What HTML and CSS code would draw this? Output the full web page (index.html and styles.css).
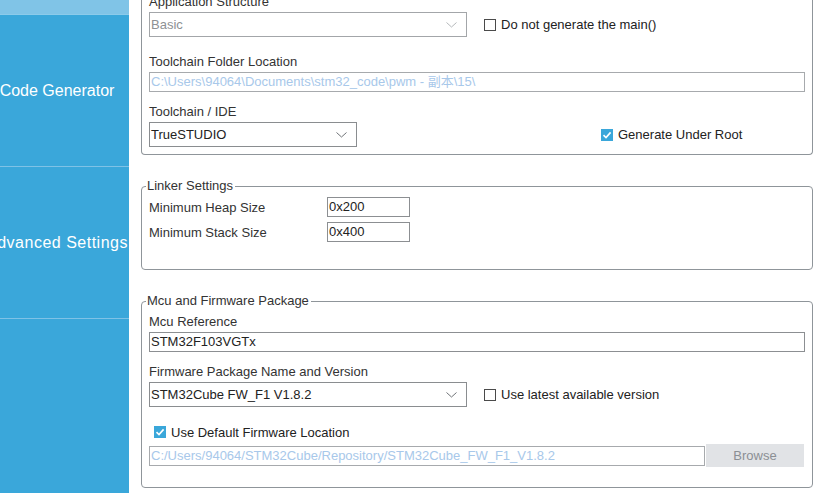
FILE: index.html
```html
<!DOCTYPE html>
<html>
<head>
<meta charset="utf-8">
<link rel="stylesheet" href="styles.css">
</head>
<body>
<div class="app">
  <nav class="sidebar">
    <div class="side-top"></div>
    <div class="side-item"><span class="side-label">Code Generator</span></div>
    <div class="side-item"><span class="side-label side-label-wide">Advanced Settings</span></div>
    <div class="side-rest"></div>
  </nav>
  <main class="main">
    <section class="panel panel-cut">
      <div class="label">Application Structure</div>
      <div class="row">
        <div class="select select-wide disabled"><span>Basic</span>
          <svg class="chev" width="11" height="6" viewBox="0 0 11 6"><path d="M0.5 0.5 L5.5 5 L10.5 0.5" fill="none" stroke="#b5b8bb" stroke-width="1"/></svg>
        </div>
        <label class="check"><span class="box"></span>Do not generate the main()</label>
      </div>
      <div class="label gap-l">Toolchain Folder Location</div>
      <div class="input full disabled-text">C:\Users\94064\Documents\stm32_code\pwm - 副本\15\</div>
      <div class="label gap-s">Toolchain / IDE</div>
      <div class="row">
        <div class="select select-narrow"><span>TrueSTUDIO</span>
          <svg class="chev" width="11" height="6" viewBox="0 0 11 6"><path d="M0.5 0.5 L5.5 5 L10.5 0.5" fill="none" stroke="#6f7377" stroke-width="1"/></svg>
        </div>
        <label class="check check-root"><span class="box checked"><svg width="12" height="12" viewBox="0 0 12 12"><path d="M2.5 6.2 L5 8.6 L9.6 3.4" fill="none" stroke="#fff" stroke-width="1.6"/></svg></span>Generate Under Root</label>
      </div>
    </section>

    <fieldset class="group linker">
      <legend>Linker Settings</legend>
      <div class="kv">
        <span class="kv-label">Minimum Heap Size</span>
        <div class="input small">0x200</div>
      </div>
      <div class="kv">
        <span class="kv-label">Minimum Stack Size</span>
        <div class="input small">0x400</div>
      </div>
    </fieldset>

    <fieldset class="group mcu">
      <legend>Mcu and Firmware Package</legend>
      <div class="label">Mcu Reference</div>
      <div class="input full">STM32F103VGTx</div>
      <div class="label gap-s">Firmware Package Name and Version</div>
      <div class="row">
        <div class="select select-wide"><span>STM32Cube FW_F1 V1.8.2</span>
          <svg class="chev" width="11" height="6" viewBox="0 0 11 6"><path d="M0.5 0.5 L5.5 5 L10.5 0.5" fill="none" stroke="#6f7377" stroke-width="1"/></svg>
        </div>
        <label class="check"><span class="box"></span>Use latest available version</label>
      </div>
      <label class="check check-default"><span class="box checked"><svg width="12" height="12" viewBox="0 0 12 12"><path d="M2.5 6.2 L5 8.6 L9.6 3.4" fill="none" stroke="#fff" stroke-width="1.6"/></svg></span>Use Default Firmware Location</label>
      <div class="row browse-row">
        <div class="input path disabled-text">C:/Users/94064/STM32Cube/Repository/STM32Cube_FW_F1_V1.8.2</div>
        <button class="btn">Browse</button>
      </div>
    </fieldset>
  </main>
</div>
</body>
</html>
```
FILE: styles.css
```css
html, body {
  margin: 0;
  padding: 0;
  background: #ffffff;
  font-family: "Liberation Sans", Arial, "Noto Sans CJK SC", sans-serif;
  font-size: 13px;
  color: #333333;
}
.app {
  display: flex;
  width: 824px;
  height: 493px;
  overflow: hidden;
}
.sidebar {
  width: 129px;
  flex: none;
  background: #3aa7da;
  display: flex;
  flex-direction: column;
  overflow: hidden;
}
.side-top {
  height: 14px;
  background: #80c4e7;
  border-bottom: 1px solid #8ccbea;
}
.side-item {
  height: 151px;
  border-bottom: 1px solid #7fc2e6;
  display: flex;
  align-items: center;
  justify-content: flex-start;
}
.side-item .side-label {
  flex: none;
  width: 180px;
  margin-left: -33px;
  text-align: center;
  color: #ffffff;
  font-size: 16px;
  white-space: nowrap;
}
.side-item .side-label-wide {
  letter-spacing: 0.5px;
}
.side-rest { flex: 1; }

.main {
  flex: 1;
  margin-left: 12px;
  margin-right: 11px;
  display: flex;
  flex-direction: column;
}
.panel-cut {
  margin-top: -6px;
  border: 1px solid #8f959a;
  border-top: none;
  border-radius: 0 0 4px 4px;
  padding: 0 7px 7px;
}
.label {
  line-height: 16px;
  height: 16px;
  margin-bottom: 2px;
  white-space: nowrap;
}
.gap-l { margin-top: 17px; }
.gap-s { margin-top: 12px; }
.row {
  display: flex;
  align-items: center;
}
.select {
  box-sizing: border-box;
  height: 25px;
  border: 1px solid #8a8d90;
  display: flex;
  align-items: center;
  justify-content: space-between;
  padding: 0 9px 0 1px;
  color: #222;
  background: #fff;
}
.select.disabled {
  color: #8e9194;
  border-color: #a3a6a9;
}
.select-wide { width: 318px; }
.select-narrow { width: 208px; }
.chev { flex: none; }
.check {
  display: flex;
  align-items: center;
  white-space: nowrap;
  color: #222;
  margin-left: 17px;
}
.check-root { margin-left: 244px; }
.box {
  box-sizing: border-box;
  width: 12px;
  height: 12px;
  border: 1px solid #4a4a4a;
  background: #fff;
  margin-right: 5px;
  display: inline-flex;
}
.box.checked {
  border: none;
  background: #3aa7da;
}
.input {
  box-sizing: border-box;
  height: 20px;
  line-height: 18px;
  border: 1px solid #8c8f92;
  padding: 0 1px;
  color: #222;
  white-space: nowrap;
  overflow: hidden;
}
.full { width: 656px; }
.disabled-text {
  color: #a8c8ea;
  border-color: #a7aaad;
}

.group {
  margin: 23px 0 0 0;
  border: 1px solid #8f959a;
  border-radius: 4px;
  padding: 0 7px;
  min-width: 0;
}
.group legend {
  padding: 0 2px 0 1px;
  margin-left: -3px;
  line-height: 16px;
  color: #333;
}
.linker { padding-top: 3px; padding-bottom: 27px; }
.kv {
  display: flex;
  align-items: center;
  margin-top: 5px;
}
.kv-label { width: 178px; }
.small { width: 83px; }
.linker .kv:first-of-type { margin-top: 0; }

.mcu { padding-top: 5px; padding-bottom: 20px; }
.check-default {
  margin-left: 5px;
  margin-top: 17px;
  height: 16px;
}
.browse-row {
  margin-top: 4px;
  align-items: center;
}
.path { width: 556px; }
.btn {
  width: 98px;
  height: 23px;
  margin-left: 1px;
  border: none;
  background: #e1e3e6;
  color: #8b8f94;
  font-family: inherit;
  font-size: 13px;
  padding: 0;
}
```
